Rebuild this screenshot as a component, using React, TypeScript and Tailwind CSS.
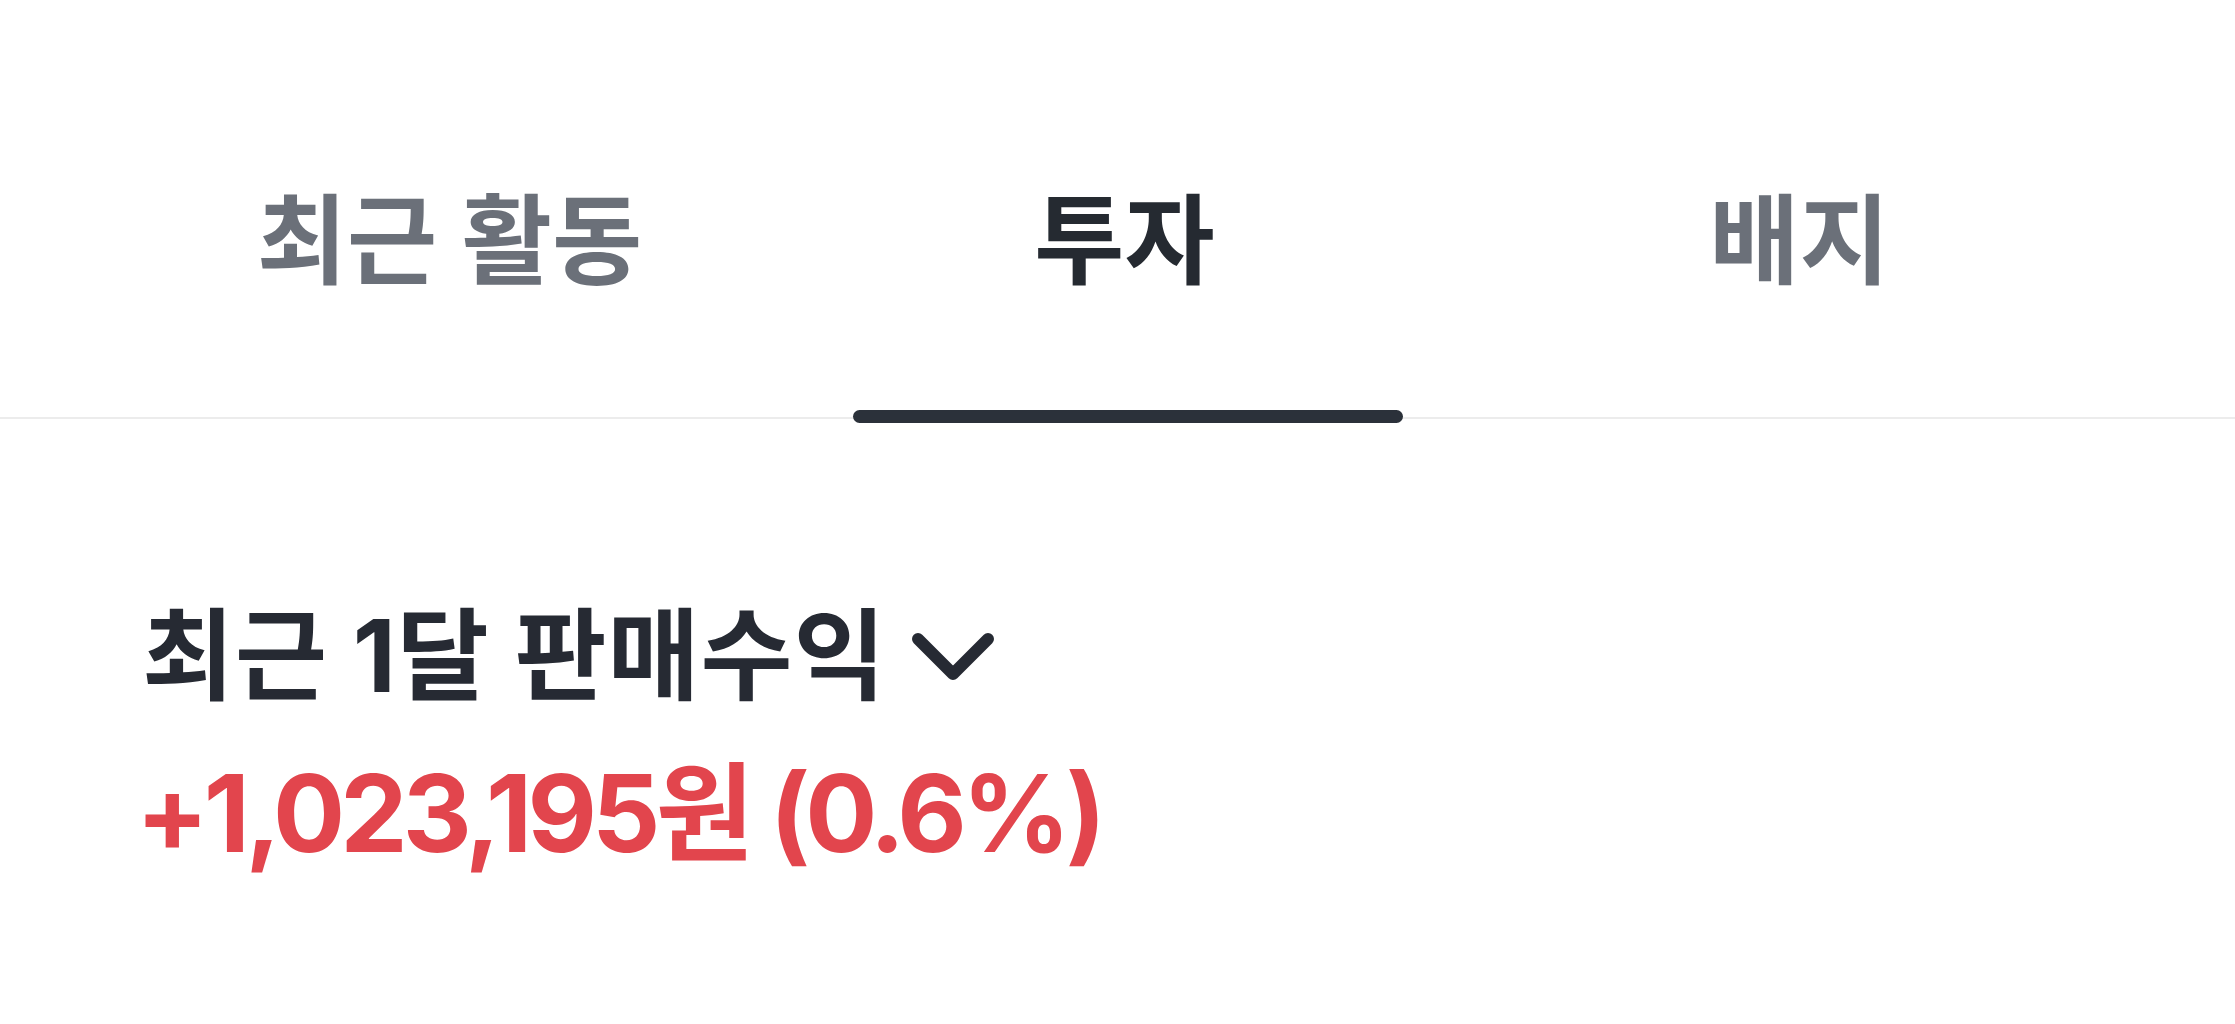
import React from "react";

const FONT = "font-['Inter','Noto_Sans_CJK_KR',sans-serif]";

function Chevron() {
  return (
    <svg width="82" height="47" viewBox="0 0 82 47" fill="none" className="shrink-0">
      <path
        d="M6 6 L41 41 L76 6"
        stroke="#262a33"
        strokeWidth="12"
        strokeLinecap="round"
        strokeLinejoin="round"
      />
    </svg>
  );
}

export default function App() {
  const tabs = [
    { label: "최근 활동", active: false },
    { label: "투자", active: true },
    { label: "배지", active: false },
  ];
  return (
    <div className={`min-h-screen w-full bg-white ${FONT}`}>
      <div className="flex border-b-2 border-[#ececec] pl-[112px] pr-[98px] pt-[176px]">
        {tabs.map((t) => (
          <div key={t.label} className="flex flex-1 flex-col">
            <div
              className={`text-center text-[98px] leading-[130px] font-semibold tracking-normal ${
                t.active ? "text-[#252a31]" : "text-[#6b7079]"
              }`}
            >
              {t.label}
            </div>
            <div className="h-[104px]" />
            {t.active ? (
              <div className="-mb-[6px] ml-[66px] h-[13px] w-[550px] rounded-full bg-[#2b313a]" />
            ) : (
              <div className="-mb-[6px] h-[13px]" />
            )}
          </div>
        ))}
      </div>
      <div className="pl-[142px] pt-[177px]">
        <div className="flex items-center gap-[26px]">
          <div className="text-[100px] leading-[120px] font-bold tracking-[0.01em] text-[#262a33]">
            최근 1달 판매수익
          </div>
          <Chevron />
        </div>
        <div className="mt-[32px] -ml-[6px] text-[107px] leading-[130px] font-bold tracking-[-0.045em] text-[#e2454d]">
          +1,023,195원 (0.6%)
        </div>
      </div>
    </div>
  );
}
